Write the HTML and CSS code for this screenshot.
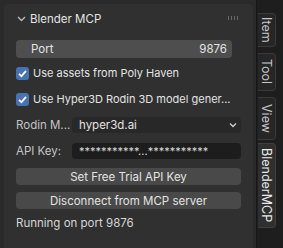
FILE: index.html
```html
<!DOCTYPE html>
<html lang="en">
<head>
  <meta charset="UTF-8" />
  <title>Blender MCP</title>
  <link rel="stylesheet" href="styles.css">
</head>
<body>

<div class="region">
  <div class="panel">
    <div class="panel-header">
      <svg class="chevron" width="9" height="6" viewBox="0 0 9 6"><path d="M1 1 L4.5 4.5 L8 1" fill="none" stroke="#bdbdbd" stroke-width="1.3"/></svg>
      <span class="panel-title">Blender MCP</span>
      <span class="grip"></span>
    </div>

    <div class="panel-body">
      <div class="num-field"><span>Port</span><span>9876</span></div>

      <label class="check"><span class="box"><svg width="11" height="11" viewBox="0 0 11 11"><path d="M2 5.8 L4.5 8.2 L9 2.8" fill="none" stroke="#fff" stroke-width="1.8"/></svg></span>Use assets from Poly Haven</label>
      <label class="check"><span class="box"><svg width="11" height="11" viewBox="0 0 11 11"><path d="M2 5.8 L4.5 8.2 L9 2.8" fill="none" stroke="#fff" stroke-width="1.8"/></svg></span>Use Hyper3D Rodin 3D model gener...</label>

      <div class="prop-row rodin">
        <span class="prop-label">Rodin M...</span>
        <div class="dropdown">
          <span>hyper3d.ai</span>
          <svg width="8" height="6" viewBox="0 0 8 6"><path d="M1 1.5 L4 4.5 L7 1.5" fill="none" stroke="#d0d0d0" stroke-width="1.3"/></svg>
        </div>
      </div>

      <div class="prop-row api">
        <span class="prop-label">API Key:</span>
        <div class="text-field">***********...***********</div>
      </div>

      <div class="btn first">Set Free Trial API Key</div>
      <div class="btn">Disconnect from MCP server</div>

      <div class="status">Running on port 9876</div>
    </div>
  </div>
</div>

<div class="tabs">
  <div class="tab t-item">Item</div>
  <div class="tab t-tool">Tool</div>
  <div class="tab t-view">View</div>
  <div class="tab active t-mcp">BlenderMCP</div>
</div>

</body>
</html>
```

FILE: styles.css
```css
* { box-sizing: border-box; }
html, body {
  margin: 0;
  padding: 0;
  width: 283px;
  height: 248px;
  overflow: hidden;
  background: #282828;
  font-family: Inter, "DejaVu Sans", sans-serif;
  font-size: 11.5px;
  color: #e3e3e3;
  white-space: nowrap;
}

body {
  display: flex;
}

.region {
  width: 256px;
  padding: 4px 3px 0 4px;
  background: #2a2a2a;
}

.panel {
  height: 100%;
  background: #303030;
  border-radius: 4px 4px 0 0;
}

.panel-header {
  height: 30px;
  display: flex;
  align-items: center;
  padding: 0 10px 0 13px;
}

.chevron { margin-right: 4px; }

.panel-title {
  font-size: 11.5px;
  flex: 1;
}

.grip {
  width: 12px;
  height: 4px;
  margin-right: 4px;
  margin-top: -2px;
  background-image: radial-gradient(circle, #6a6a6a 0.8px, transparent 1px);
  background-size: 3px 2px;
}

.panel-body {
  padding: 6px 12px 0 12px;
}

.num-field {
  height: 18px;
  margin-right: 9px;
  background: #4e4e4e;
  border-radius: 4px;
  display: flex;
  justify-content: space-between;
  align-items: center;
  padding: 0 5px 0 15px;
}

.check {
  display: flex;
  align-items: center;
  height: 14px;
  margin-top: 8px;
  font-size: 11px;
}

.check + .check { margin-top: 12px; }

.box {
  width: 13px;
  height: 13px;
  flex-shrink: 0;
  border-radius: 3px;
  background: #4772b3;
  display: flex;
  align-items: center;
  justify-content: center;
  margin-right: 4px;
}

.prop-row {
  display: flex;
  align-items: center;
  height: 16px;
}

.rodin { margin-top: 11px; }
.api { margin-top: 10px; }

.prop-label {
  width: 56px;
  flex-shrink: 0;
  color: #c4c4c4;
}

.dropdown, .text-field {
  flex: 1;
  height: 16px;
  border-radius: 4px;
  display: flex;
  align-items: center;
  padding: 0 4px 0 7px;
}

.dropdown {
  background: #282828;
  justify-content: space-between;
}

.text-field {
  background: #1d1d1d;
  color: #d8d8d8;
  font-size: 11px;
}

.btn {
  height: 17px;
  background: #494949;
  border-radius: 4px;
  display: flex;
  align-items: center;
  justify-content: center;
  margin-top: 7px;
}

.btn.first { margin-top: 9px; }

.status {
  margin-top: 7px;
  color: #d6d6d6;
}

.tabs {
  flex: 1;
  background: #1e1e1e;
  border-left: 1px solid #171717;
  padding: 13px 0 0 1px;
}

.tab {
  writing-mode: vertical-rl;
  width: 18px;
  background: #262626;
  border: 1px solid #3a3a3a;
  border-left: none;
  border-radius: 0 4px 4px 0;
  color: #c8c8c8;
  display: flex;
  align-items: center;
  justify-content: center;
  font-size: 12.5px;
}

.t-item { height: 34px; }
.t-tool { height: 38px; margin-top: 6px; }
.t-view { height: 43px; margin-top: 6px; }
.t-mcp { height: 85px; margin-top: 3px; }

.tab.active {
  background: #2f2f2f;
  color: #e8e8e8;
  border-color: #3f3f3f;
}
```
